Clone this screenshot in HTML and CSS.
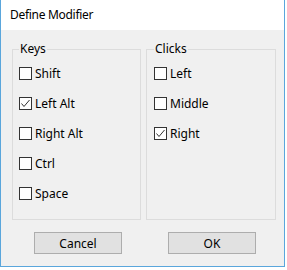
FILE: index.html
```html
<!DOCTYPE html>
<html>
<head>
<meta charset="utf-8">
<link rel="stylesheet" href="styles.css">
</head>
<body>
<div class="window">
  <div class="titlebar">Define Modifier</div>
  <div class="content">
    <div class="groups">
      <fieldset class="group keys">
        <legend>Keys</legend>
        <div class="rows">
          <div class="row"><span class="box"></span><span>Shift</span></div>
          <div class="row"><span class="box checked"><svg width="11" height="11" viewBox="0 0 11 11"><polyline points="1.5,5.5 4,8.5 9.5,2" fill="none" stroke="#333" stroke-width="1"/></svg></span><span>Left Alt</span></div>
          <div class="row"><span class="box"></span><span>Right Alt</span></div>
          <div class="row"><span class="box"></span><span>Ctrl</span></div>
          <div class="row"><span class="box"></span><span>Space</span></div>
        </div>
      </fieldset>
      <fieldset class="group clicks">
        <legend>Clicks</legend>
        <div class="rows">
          <div class="row"><span class="box"></span><span>Left</span></div>
          <div class="row"><span class="box"></span><span>Middle</span></div>
          <div class="row"><span class="box checked"><svg width="11" height="11" viewBox="0 0 11 11"><polyline points="1.5,5.5 4,8.5 9.5,2" fill="none" stroke="#333" stroke-width="1"/></svg></span><span>Right</span></div>
        </div>
      </fieldset>
    </div>
    <div class="buttons">
      <button class="btn">Cancel</button>
      <button class="btn">OK</button>
    </div>
  </div>
</div>
</body>
</html>
```
FILE: styles.css
```css
html, body {
  margin: 0;
  padding: 0;
  background: #ffffff;
}
body {
  font-family: "Noto Sans", "Open Sans", sans-serif;
  font-size: 12px;
  color: #000;
}
.window {
  width: 283px;
  border: 1px solid #5aa6dc;
  border-top: none;
  background: #f0f0f0;
}
.titlebar {
  height: 30px;
  line-height: 30px;
  background: #ffffff;
  padding-left: 9px;
  letter-spacing: -0.3px;
}
.content {
  padding: 11px 0 12px 11px;
  display: flex;
  flex-direction: column;
}
.groups {
  display: flex;
  gap: 5px;
}
.group {
  margin: 0;
  border: 1px solid #dcdcdc;
  height: 179px;
  box-sizing: border-box;
  padding: 0 0 0 6px;
  min-width: 0;
}
.keys { width: 129px; }
.clicks { width: 130px; padding-left: 7px; }
legend {
  padding: 0 1px;
  line-height: 16px;
}
.rows {
  display: flex;
  flex-direction: column;
  gap: 14px;
  padding-top: 8px;
}
.row {
  display: flex;
  align-items: center;
  height: 16px;
  gap: 3px;
}
.box {
  width: 11px;
  height: 11px;
  border: 1px solid #333;
  background: #fff;
  display: flex;
  flex: none;
}
.buttons {
  display: flex;
  gap: 46px;
  padding-left: 22px;
  margin-top: 12px;
}
.btn {
  width: 88px;
  height: 22px;
  margin: 0;
  padding: 0;
  border: 1px solid #adadad;
  background: #e1e1e1;
  font-family: inherit;
  font-size: 12px;
  color: #000;
}
```
